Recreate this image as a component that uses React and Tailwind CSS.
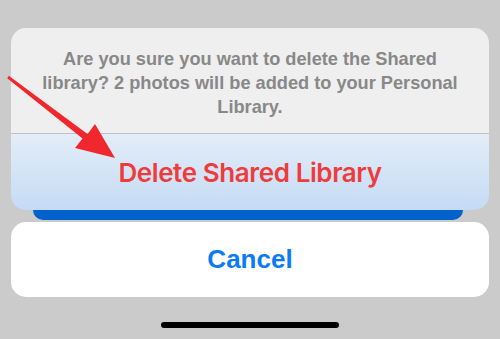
export default function App() {
  return (
    <div className="relative w-[500px] h-[339px] overflow-hidden bg-[#cbcbcb] font-['Liberation_Sans',Arial,sans-serif]">
      <div className="flex flex-col px-[11px] pt-[28px]">
        {/* Alert */}
        <div className="rounded-[15px] overflow-hidden">
          <div className="h-[106px] bg-[#efefef] border-b border-[#b8c2cc] flex items-center justify-center px-[20px] pt-[4px]">
            <p className="text-center text-[18.2px] leading-[24px] font-bold text-[#888888]">
              Are you sure you want to delete the Shared library? 2 photos will be added to your Personal Library.
            </p>
          </div>
          <div className="h-[76px] bg-gradient-to-b from-[#e4edf8] to-[#c4dbf5] flex items-center justify-center">
            <span className="text-[26px] text-[#ee3b3b] font-['Inter',sans-serif] font-semibold tracking-[-0.4px]">Delete Shared Library</span>
          </div>
        </div>
        <div className="ml-[22px] mr-[26px] h-[10px] bg-[#0060cc] rounded-b-[14px]" />

        {/* Cancel */}
        <div className="mt-[2px] h-[75px] bg-white rounded-[15px] flex items-center justify-center">
          <span className="text-[26px] font-bold text-[#0a7bf5]">Cancel</span>
        </div>

        {/* Home indicator */}
        <div className="mt-[25px] flex justify-center">
          <div className="w-[178px] h-[6px] rounded-full bg-black" />
        </div>
      </div>

      {/* Annotation arrow */}
      <svg className="absolute left-0 top-0" width="500" height="339" viewBox="0 0 500 339">
        <polygon points="8.8,75.8 87.5,134 95,124 115,158 75,148 82.5,138.5 7.2,78.2" fill="#f0282d" />
      </svg>
    </div>
  );
}
